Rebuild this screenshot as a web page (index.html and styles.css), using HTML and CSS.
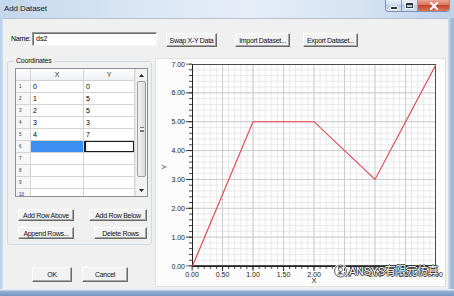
FILE: index.html
```html
<!DOCTYPE html>
<html>
<head>
<meta charset="utf-8">
<title>Add Dataset</title>
<link rel="stylesheet" href="styles.css">
</head>
<body>
<div class="window">
  <div class="titlebar">
    <span class="title">Add Dataset</span>
    <div class="caption-btns">
      <span class="cbtn min"><span class="glyph-min"></span></span>
      <span class="cbtn max"><span class="glyph-max"></span></span>
      <span class="cbtn close"><svg width="10" height="8" viewBox="0 0 10 8"><path d="M2 1 L8 7 M8 1 L2 7" stroke="#fff" stroke-width="2" stroke-linecap="square"/></svg></span>
    </div>
  </div>
  <div class="mid">
    <div class="lframe"></div>
    <div class="client">
      <div class="toprow">
        <span class="name-label">Name:</span>
        <div class="input">ds2</div>
        <div class="btn swap">Swap X-Y Data</div>
        <div class="btn import">Import Dataset...</div>
        <div class="btn export">Export Dataset...</div>
      </div>
      <div class="main">
        <div class="leftcol">
          <div class="group">
            <span class="legend">Coordinates</span>
            <div class="table">
              <div class="grid">
                <div class="row head"><div class="rh"></div><div class="c">X</div><div class="c">Y</div></div>
                <div class="row"><div class="rh">1</div><div class="c">0</div><div class="c">0</div></div>
                <div class="row"><div class="rh">2</div><div class="c">1</div><div class="c">5</div></div>
                <div class="row"><div class="rh">3</div><div class="c">2</div><div class="c">5</div></div>
                <div class="row"><div class="rh">4</div><div class="c">3</div><div class="c">3</div></div>
                <div class="row"><div class="rh">5</div><div class="c">4</div><div class="c">7</div></div>
                <div class="row"><div class="rh">6</div><div class="c sel"></div><div class="c focus"></div></div>
                <div class="row"><div class="rh">7</div><div class="c"></div><div class="c"></div></div>
                <div class="row"><div class="rh">8</div><div class="c"></div><div class="c"></div></div>
                <div class="row"><div class="rh">9</div><div class="c"></div><div class="c"></div></div>
                <div class="row"><div class="rh">10</div><div class="c"></div><div class="c"></div></div>
              </div>
              <div class="vscroll">
                <div class="arrow"><svg width="5" height="3" viewBox="0 0 5 3"><path d="M0 3 L2.5 0 L5 3Z" fill="#222"/></svg></div>
                <div class="track"><div class="thumb"><span class="grip"></span></div></div>
                <div class="arrow"><svg width="5" height="3" viewBox="0 0 5 3"><path d="M0 0 L2.5 3 L5 0Z" fill="#222"/></svg></div>
              </div>
            </div>
            <div class="btnrow r1">
              <div class="btn b-above">Add Row Above</div>
              <div class="btn b-below">Add Row Below</div>
            </div>
            <div class="btnrow r2">
              <div class="btn b-append">Append Rows...</div>
              <div class="btn b-delete">Delete Rows</div>
            </div>
          </div>
          <div class="okrow">
            <div class="btn b-ok">OK</div>
            <div class="btn b-cancel">Cancel</div>
          </div>
        </div>
        <div class="chart">
          <svg class="plot" width="291" height="229" viewBox="0 0 291 229">
            <defs>
              <pattern id="gMinor" patternUnits="userSpaceOnUse" x="36.5" y="5.5" width="6.1" height="5.7714">
                <rect x="0" y="0" width="1" height="5.7714" fill="#e8e8e8"/>
                <rect x="0" y="0" width="6.1" height="1" fill="#e8e8e8"/>
              </pattern>
              <pattern id="gMajor" patternUnits="userSpaceOnUse" x="36.5" y="5.5" width="30.5" height="28.857">
                <rect x="0" y="0" width="1" height="28.857" fill="#cdcdcd"/>
                <rect x="0" y="0" width="30.5" height="1" fill="#cdcdcd"/>
              </pattern>
              <pattern id="tyMinor" patternUnits="userSpaceOnUse" x="0" y="5.5" width="10" height="5.7714">
                <rect x="0" y="0" width="10" height="1" fill="#444"/>
              </pattern>
              <pattern id="tyMajor" patternUnits="userSpaceOnUse" x="0" y="5.5" width="10" height="28.857">
                <rect x="0" y="0" width="10" height="1" fill="#333"/>
              </pattern>
              <pattern id="txMinor" patternUnits="userSpaceOnUse" x="36.5" y="0" width="6.1" height="10">
                <rect x="0" y="0" width="1" height="10" fill="#444"/>
              </pattern>
              <pattern id="txMajor" patternUnits="userSpaceOnUse" x="36.5" y="0" width="30.5" height="10">
                <rect x="0" y="0" width="1" height="10" fill="#333"/>
              </pattern>
            </defs>
            <rect x="37" y="6" width="244" height="202" fill="#ffffff"/>
            <rect x="37" y="6" width="244" height="202" fill="url(#gMinor)"/>
            <rect x="37" y="6" width="244" height="202" fill="url(#gMajor)"/>
            <rect x="34" y="5.5" width="3" height="203" fill="url(#tyMinor)"/>
            <rect x="31" y="5.5" width="6" height="203" fill="url(#tyMajor)"/>
            <rect x="36.5" y="208" width="245" height="3" fill="url(#txMinor)"/>
            <rect x="36.5" y="208" width="245" height="5" fill="url(#txMajor)"/>
            <rect x="37.5" y="6.5" width="243" height="201" fill="none" stroke="#4a4a4a" stroke-width="1"/>
            <path d="M37.5 6 V208.5 H281" fill="none" stroke="#222" stroke-width="1"/>
            <polyline points="37.5,208 98,63.7 159,63.7 220,121.4 281,6.5" fill="none" stroke="#e2404e" stroke-width="1.1"/>
            <g class="ylab" text-anchor="end">
              <text x="30" y="8.5">7.00</text>
              <text x="30" y="37.4">6.00</text>
              <text x="30" y="66.2">5.00</text>
              <text x="30" y="95.1">4.00</text>
              <text x="30" y="123.9">3.00</text>
              <text x="30" y="152.8">2.00</text>
              <text x="30" y="181.6">1.00</text>
              <text x="30" y="210.5">0.00</text>
            </g>
            <g class="xlab" text-anchor="middle">
              <text x="37" y="218.5">0.00</text>
              <text x="67.5" y="218.5">0.50</text>
              <text x="98" y="218.5">1.00</text>
              <text x="128.5" y="218.5">1.50</text>
              <text x="159" y="218.5">2.00</text>
              <text x="189.5" y="218.5">2.50</text>
              <text x="220" y="218.5">3.00</text>
              <text x="250.5" y="218.5">3.50</text>
              <text x="281" y="218.5">4.00</text>
            </g>
            <text class="axt" x="159" y="225" text-anchor="middle">X</text>
            <text class="axt" x="12" y="109" text-anchor="middle" transform="rotate(-90 12 109)">Y</text>
          </svg>
          <div class="wm">
            <svg class="wm-icon" width="15" height="14" viewBox="0 0 15 14">
              <circle cx="7.5" cy="7" r="6" fill="none" stroke="#fff" stroke-width="2.2"/>
              <circle cx="7.5" cy="7" r="6" fill="none" stroke="#333" stroke-width="0.8"/>
              <circle cx="7.5" cy="5.5" r="2" fill="#fff" stroke="#333" stroke-width="0.7"/>
              <path d="M4.5 11 Q7.5 7.5 10.5 11" fill="none" stroke="#333" stroke-width="0.8"/>
            </svg>
            <span class="wm-text">ANSYS有限元仿真</span>
          </div>
        </div>
      </div>
    </div>
    <div class="rframe"></div>
  </div>
  <div class="bframe"></div>
</div>
</body>
</html>
```

FILE: styles.css
```css
* { box-sizing: border-box; margin: 0; padding: 0; }
html, body { width: 454px; height: 296px; overflow: hidden; }
body {
  font-family: "Liberation Sans", Arial, sans-serif;
  font-size: 7px;
  color: #000;
  background: #fff;
}

.window {
  width: 454px;
  height: 296px;
  display: flex;
  flex-direction: column;
  background: #c2d6ec;
}

/* title bar */
.titlebar {
  height: 18px;
  display: flex;
  align-items: flex-start;
  background: linear-gradient(to right, #c3d7ee 0%, #d9e6f4 30%, #e6eef7 55%, #d4e2f2 80%, #bfd3ec 100%);
}
.title {
  font-size: 8px;
  line-height: 9px;
  margin: 4px 0 0 4px;
  color: #1a1a1a;
  letter-spacing: -0.1px;
}
.caption-btns {
  margin-left: auto;
  margin-right: 4px;
  display: flex;
  height: 12px;
  border: 1px solid #7d8fab;
  border-top: none;
  border-radius: 0 0 4px 4px;
  overflow: hidden;
}
.cbtn {
  height: 11px;
  display: flex;
  align-items: center;
  justify-content: center;
}
.min, .max {
  width: 16px;
  background: linear-gradient(#e6eef8 0%, #d3e0f0 45%, #b9cce4 50%, #d4e2f2 100%);
  border-right: 1px solid #8a9cb8;
}
.close {
  width: 31px;
  background: linear-gradient(#e9a796 0%, #d9775f 45%, #c4432a 50%, #d8775a 100%);
}
.glyph-min {
  width: 6px;
  height: 2px;
  background: #333;
  margin-top: 4px;
  box-shadow: 0 0 0 1px #fff;
}
.glyph-max {
  width: 7px;
  height: 5px;
  border: 1px solid #333;
  border-top-width: 2px;
  box-shadow: 0 0 0 1px rgba(255,255,255,0.8);
}

/* frame */
.mid { flex: 1; display: flex; min-height: 0; }
.lframe { width: 3px; background: linear-gradient(to right, #b6cde8, #cfdff2); }
.rframe { width: 6px; background: linear-gradient(to right, #dbe5f0, #a9c0dc 40%, #9bb4d4); }
.bframe {
  height: 7px;
  background: linear-gradient(#e4ebf4 0px, #e4ebf4 1px, #97b1d3 2px, #7595c1 100%);
}

/* client area */
.client {
  flex: 1;
  background: #f0f0f0;
  border-top: 1px solid #b3c2d4;
  padding: 13px 2px 2px 4px;
  display: flex;
  flex-direction: column;
}

.toprow {
  height: 15px;
  display: flex;
  align-items: flex-start;
}
.name-label {
  width: 21px;
  margin-left: 4px;
  line-height: 14px;
  letter-spacing: -0.2px;
}
.input {
  width: 125px;
  height: 14px;
  background: #fff;
  border: 1px solid;
  border-color: #9a9a9a #f5f5f5 #f5f5f5 #9a9a9a;
  box-shadow: inset 1px 1px #6a6a6a;
  padding-left: 3px;
  line-height: 12px;
}

.btn {
  height: 14px;
  display: flex;
  align-items: center;
  justify-content: center;
  background: #f2f2f2;
  border: 1px solid;
  border-color: #ffffff #6a6a6a #6a6a6a #ffffff;
  box-shadow: inset -1px -1px #a6a6a6;
  letter-spacing: -0.3px;
  white-space: nowrap;
  color: #111;
}
.swap { width: 51px; margin-left: 9px; margin-top: 1px; }
.import { width: 55px; margin-left: 18px; margin-top: 1px; }
.export { width: 55px; margin-left: 13px; margin-top: 1px; }

.main {
  flex: 1;
  margin-top: 11px;
  display: flex;
  min-height: 0;
}
.leftcol {
  width: 145px;
  display: flex;
  flex-direction: column;
}

/* group box */
.group {
  margin-top: 3px;
  height: 184px;
  border: 1px solid #d2dbe2;
  border-radius: 3px;
  padding: 0 3px 5px 7px;
  display: flex;
  flex-direction: column;
}
.legend {
  display: block;
  align-self: flex-start;
  height: 8px;
  line-height: 8px;
  margin: -5px 0 0 -1px;
  padding: 0 2px;
  background: #f0f0f0;
  letter-spacing: -0.2px;
  color: #111;
}

/* table */
.table {
  margin-top: 3px;
  width: 133px;
  height: 129px;
  border: 1px solid #8a8f98;
  background: #fff;
  display: flex;
  overflow: hidden;
}
.grid {
  width: 119px;
  overflow: hidden;
}
.row {
  display: grid;
  grid-template-columns: 15px 53px 51px;
  height: 12px;
}
.row > div {
  border-right: 1px solid #d4d4d4;
  border-bottom: 1px solid #d4d4d4;
}
.rh {
  background: #f6f6f6;
  font-size: 4.5px;
  line-height: 11px;
  padding-left: 3px;
  color: #333;
}
.c {
  line-height: 11px;
  padding-left: 2px;
  font-size: 7px;
}
.head > div {
  background: linear-gradient(#ffffff, #eef0f2);
  border-color: #cfd3d8;
  text-align: center;
  padding-left: 0;
  color: #333;
}
.sel { background: #3a8ff0; }
.focus { box-shadow: inset 0 0 0 1px #1a1a1a, inset 1px 0 0 1px #1a1a1a; }

.vscroll {
  width: 12px;
  display: flex;
  flex-direction: column;
  background: #f3f3f3;
  border-left: 1px solid #e6e6e6;
}
.arrow {
  height: 12px;
  display: flex;
  align-items: center;
  justify-content: center;
}
.track {
  flex: 1;
  padding: 0 1px;
}
.thumb {
  height: 96px;
  border: 1px solid #9b9b9b;
  border-radius: 2px;
  background: linear-gradient(to right, #f4f4f4, #dadada);
  display: flex;
  align-items: center;
  justify-content: center;
}
.grip {
  width: 4px;
  height: 5px;
  border-top: 1px solid #777;
  border-bottom: 1px solid #777;
  background: linear-gradient(#fff 0 1px, #777 1px 2px, #fff 2px);
  background-size: 100% 3px;
  background-position: 0 1px;
  background-repeat: no-repeat;
}

/* group buttons */
.btnrow {
  display: flex;
  justify-content: space-between;
  padding: 0 1px 0 3px;
}
.btnrow .btn { height: 12px; }
.r1 { margin-top: 12px; }
.r2 { margin-top: 6px; }
.b-above, .b-append { width: 56px; }
.b-below { width: 58px; }
.b-delete { width: 53px; }

.okrow {
  margin-top: 22px;
  display: flex;
  padding-left: 25px;
}
.okrow .btn { height: 15px; }
.b-ok { width: 40px; }
.b-cancel { width: 46px; margin-left: 10px; }

/* chart */
.chart {
  position: relative;
  margin-left: 3px;
  width: 291px;
  height: 229px;
  background: #fcfcfc;
  box-shadow: inset 0 0 0 1px #e0e0e0;
}
.plot { display: block; }
.plot text {
  font-family: "Liberation Sans", Arial, sans-serif;
  font-size: 7px;
  fill: #222;
}
.plot .axt { font-size: 7.5px; }

.wm {
  position: absolute;
  left: 178px;
  top: 206px;
  display: flex;
  align-items: center;
}
.wm-text {
  font-family: "Liberation Sans", "Noto Sans CJK SC", sans-serif;
  font-size: 11px;
  line-height: 14px;
  color: #fff;
  letter-spacing: -0.3px;
  text-shadow: 1px 0 0 #333, -1px 0 0 #333, 0 1px 0 #333, 0 -1px 0 #333;
  margin-left: 1px;
}
```
